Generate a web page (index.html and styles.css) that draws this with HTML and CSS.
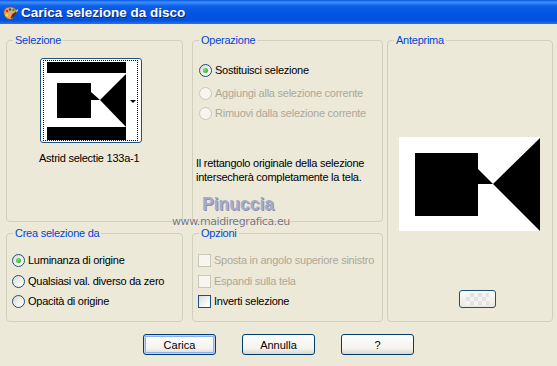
FILE: index.html
```html
<!DOCTYPE html>
<html lang="it">
<head>
  <meta charset="UTF-8">
  <title>Carica selezione da disco</title>
  <link rel="stylesheet" href="styles.css">
</head>
<body>
  <div class="window">
    <div class="titlebar">
      <svg class="app-icon" width="16" height="16" viewBox="0 0 16 16">
        <path d="M2 9 C1 5 4 2 8 2 C12 2 15 4 14 7 C13 9 10 8 10 10 C10 12 12 13 10 14 C6 15 3 13 2 9 Z" fill="#e8a860" stroke="#8a4a18" stroke-width="0.8"/>
        <circle cx="5" cy="6" r="1.3" fill="#e02020"/>
        <circle cx="8" cy="4.5" r="1.2" fill="#2050e0"/>
        <circle cx="11.5" cy="5" r="1.2" fill="#20a020"/>
        <circle cx="5" cy="10" r="1.2" fill="#f0e020"/>
        <path d="M9 13 L15 6" stroke="#603010" stroke-width="1.6"/>
        <path d="M14 7 L16 4.5" stroke="#c0c0c0" stroke-width="1.6"/>
      </svg>
      <span class="title">Carica selezione da disco</span>
    </div>

    <div class="panels">
      <div class="group selezione">
        <span class="legend">Selezione</span>
        <div class="thumb">
          <div class="focus">
            <svg width="79" height="78" viewBox="0 0 79 78">
              <rect width="79" height="78" fill="#000"/>
              <rect y="11" width="79" height="54" fill="#fff"/>
              <rect x="10" y="21" width="34" height="35" fill="#000"/>
              <polygon points="44,30 53,38 44,38" fill="#000"/>
              <polygon points="53,38 79,12 79,65" fill="#000"/>
            </svg>
            <span class="arrow"></span>
          </div>
        </div>
        <div class="thumb-name">Astrid selectie 133a-1</div>
      </div>

      <div class="group operazione">
        <span class="legend">Operazione</span>
        <div class="opt first"><span class="radio checked"></span>Sostituisci selezione</div>
        <div class="opt second disabled"><span class="radio"></span>Aggiungi alla selezione corrente</div>
        <div class="opt third disabled"><span class="radio"></span>Rimuovi dalla selezione corrente</div>
        <p class="note">Il rettangolo originale della selezione<br>intersecherà completamente la tela.</p>
      </div>

      <div class="group anteprima">
        <span class="legend">Anteprima</span>
        <svg class="preview" width="141" height="94" viewBox="0 0 141 94">
          <rect width="141" height="94" fill="#fff"/>
          <rect x="16" y="16" width="63" height="63" fill="#000"/>
          <polygon points="79,32 94,47 79,47" fill="#000"/>
          <polygon points="94,47 141,1 141,94" fill="#000"/>
        </svg>
        <div class="mini-btn"><span class="checker"></span></div>
      </div>

      <div class="group crea">
        <span class="legend">Crea selezione da</span>
        <div class="opt first"><span class="radio checked"></span>Luminanza di origine</div>
        <div class="opt second"><span class="radio"></span>Qualsiasi val. diverso da zero</div>
        <div class="opt third"><span class="radio"></span>Opacità di origine</div>
      </div>

      <div class="group opzioni">
        <span class="legend">Opzioni</span>
        <div class="opt first disabled"><span class="check"></span>Sposta in angolo superiore sinistro</div>
        <div class="opt second disabled"><span class="check"></span>Espandi sulla tela</div>
        <div class="opt third"><span class="check"></span>Inverti selezione</div>
      </div>
    </div>

    <div class="buttons">
      <button class="btn default">Carica</button>
      <button class="btn">Annulla</button>
      <button class="btn">?</button>
    </div>

    <div class="watermark">
      <span class="wm-name">Pinuccia</span>
      <span class="wm-url">www.maidiregrafica.eu</span>
    </div>
  </div>
</body>
</html>
```

FILE: styles.css
```css
* {
  box-sizing: border-box;
}

body {
  margin: 0;
  background: #ece9d8;
  font-family: Tahoma, "Liberation Sans", Arial, sans-serif;
  font-size: 11px;
  letter-spacing: -0.25px;
  color: #000;
}

.window {
  position: relative;
  width: 557px;
  height: 366px;
  background: #ece9d8;
  overflow: hidden;
}

/* title bar */
.titlebar {
  height: 24px;
  display: flex;
  align-items: center;
  padding: 1px 0 0 2px;
  background: linear-gradient(#0a5ae6 0%, #3d8ffb 10%, #0d5ee8 25%, #0054e3 60%, #0052de 85%, #2a74e8 100%);
}

.app-icon {
  margin-right: 3px;
}

.title {
  color: #fff;
  font-family: "Liberation Sans", Arial, sans-serif;
  font-weight: bold;
  font-size: 13.5px;
  letter-spacing: 0;
  text-shadow: 1px 1px #0a2a7a;
}

/* group boxes */
.panels {
  display: grid;
  grid-template-columns: 186px 195px 166px;
  grid-template-rows: 182px 89px;
  row-gap: 11px;
  padding: 16px 0 0 6px;
}

.group {
  position: relative;
  border: 1px solid #d0d0bf;
  border-radius: 4px;
}

.legend {
  position: absolute;
  top: -8px;
  left: 6px;
  padding: 0 2px;
  background: #ece9d8;
  color: #0046d5;
  line-height: 14px;
}

.selezione,
.crea {
  width: 177px;
}

.operazione,
.opzioni {
  width: 191px;
}

.anteprima {
  grid-column: 3;
  grid-row: 1 / span 2;
  display: flex;
  flex-direction: column;
  padding: 96px 0 0 11px;
}

/* selection thumbnail */
.selezione {
  padding: 17px 0 0 33px;
}

.thumb {
  width: 102px;
  height: 85px;
  border: 1px solid #1c5180;
  border-radius: 3px;
  background: #fff;
  padding: 1px 3px 1px 2px;
}

.focus {
  height: 100%;
  display: flex;
  align-items: center;
  border: 1px dotted #000;
  padding: 0 0 0 3px;
}

.arrow {
  margin-left: auto;
  margin-right: 1px;
  margin-top: 2px;
  border-left: 3px solid transparent;
  border-right: 3px solid transparent;
  border-top: 3px solid #000;
}

.thumb-name {
  margin: 9px 0 0 -1px;
  line-height: 13px;
}

/* radios and checkboxes */
.opt {
  display: flex;
  align-items: center;
  height: 16px;
  white-space: nowrap;
}

.operazione .opt {
  padding-left: 6px;
}

.crea .opt {
  padding-left: 5px;
}

.opzioni .opt {
  padding-left: 5px;
}

.operazione .first { margin-top: 21px; }
.operazione .second { margin-top: 7px; }
.operazione .third { margin-top: 4px; }

.crea .first,
.opzioni .first { margin-top: 18px; }
.crea .second,
.opzioni .second { margin-top: 5px; }
.crea .third,
.opzioni .third { margin-top: 4px; }

.radio {
  position: relative;
  width: 13px;
  height: 13px;
  border-radius: 50%;
  border: 1px solid #1c5180;
  background: linear-gradient(135deg, #dcd9cb 0%, #f4f3ee 60%, #fff 100%);
  margin-right: 3px;
  flex-shrink: 0;
}

.radio.checked::after {
  content: "";
  position: absolute;
  left: 3px;
  top: 3px;
  width: 5px;
  height: 5px;
  border-radius: 50%;
  background: radial-gradient(circle at 35% 35%, #6ee86a, #21a121);
}

.check {
  width: 13px;
  height: 13px;
  border: 1px solid #1c5180;
  background: linear-gradient(135deg, #dcdcd7 0%, #f6f6f3 60%, #fff 100%);
  margin-right: 3px;
  flex-shrink: 0;
}

.disabled {
  color: #aca899;
}

.disabled .radio,
.disabled .check {
  border-color: #cac8bb;
  background: #f6f5ee;
}

.note {
  margin: 35px 0 0 3px;
  line-height: 14px;
}

/* preview */
.mini-btn {
  width: 37px;
  height: 18px;
  margin: 59px 0 0 60px;
  border: 1px solid #1c5180;
  border-radius: 3px;
  background: linear-gradient(#fcfcfb, #eae8e0);
  padding: 2px 6px;
}

.checker {
  display: block;
  height: 100%;
  background-color: #f4f4f4;
  background-image:
    linear-gradient(45deg, #e2e2e2 25%, transparent 25%, transparent 75%, #e2e2e2 75%),
    linear-gradient(45deg, #e2e2e2 25%, transparent 25%, transparent 75%, #e2e2e2 75%);
  background-size: 8px 8px;
  background-position: 0 0, 4px 4px;
}

/* bottom buttons */
.buttons {
  display: flex;
  justify-content: center;
  gap: 26px;
  margin-top: 12px;
}

.btn {
  width: 73px;
  height: 21px;
  border: 1px solid #003c74;
  border-radius: 3px;
  background: linear-gradient(#fefefe 0%, #f4f3ee 70%, #dcd8cc 100%);
  font-family: inherit;
  font-size: 11px;
  color: #000;
  padding: 0;
}

.btn.default {
  box-shadow: inset 0 0 0 1px #c0d4f4, inset 0 0 0 2px #8cb0ec;
}

/* watermark */
.watermark {
  position: absolute;
  left: 0;
  top: 0;
}

.wm-name {
  position: absolute;
  left: 202px;
  top: 194px;
  font-family: "Liberation Sans", sans-serif;
  font-weight: bold;
  font-size: 17.5px;
  letter-spacing: 0;
  color: #a7abc8;
  text-shadow: 1px 1px 0 #8c90b0;
  white-space: nowrap;
}

.wm-url {
  position: absolute;
  left: 172px;
  top: 215px;
  font-family: "DejaVu Sans", sans-serif;
  font-size: 11px;
  letter-spacing: -0.4px;
  color: #74747e;
  text-shadow: 0 0 1px #fff;
  white-space: nowrap;
}
```
